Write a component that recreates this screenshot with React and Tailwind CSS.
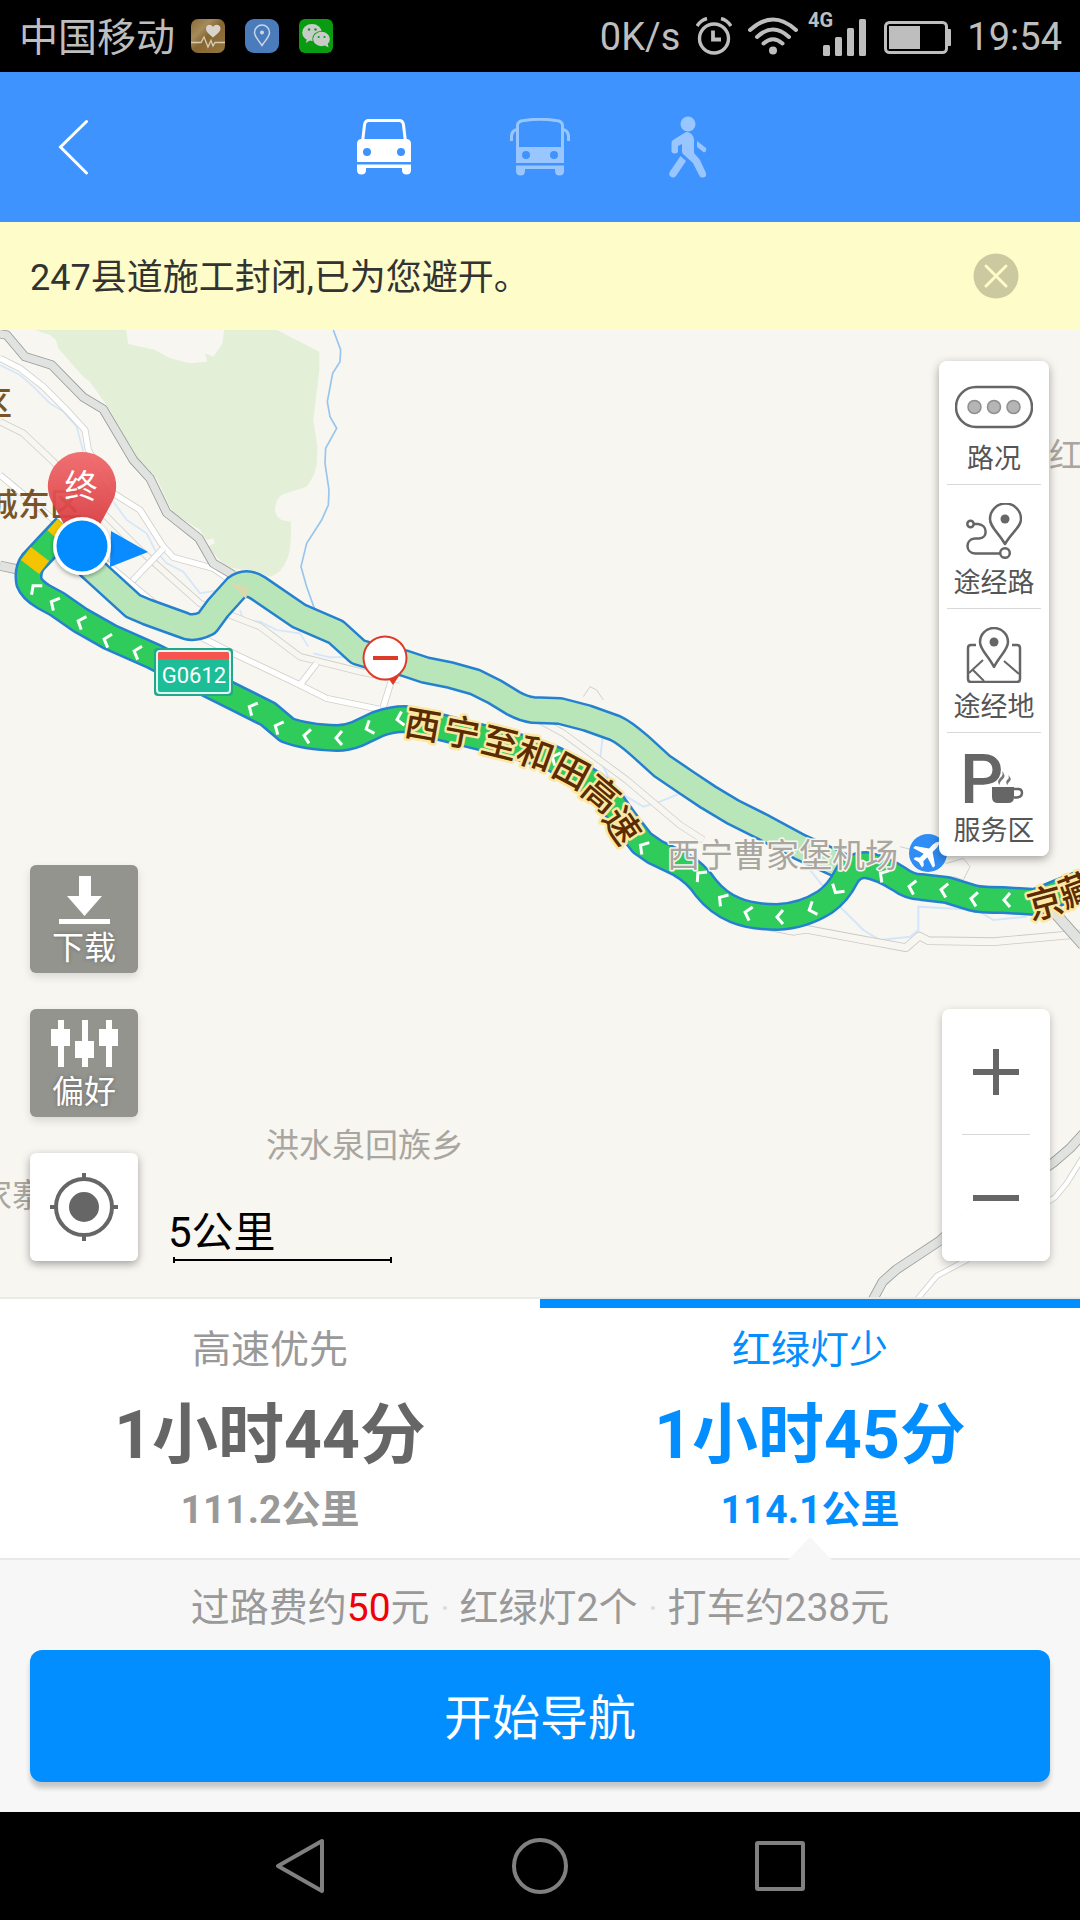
import React, { useState } from "react";

const FONT = "font-[Roboto,'Noto_Sans_CJK_SC',sans-serif]";

function StatusBar() {
  return (
    <header className="flex h-[72px] items-center justify-between bg-black pl-[19px] pr-[18px] text-[38px] leading-[44px] text-[#bebebe]">
      <div className="flex items-center gap-5">
        <span className="pt-1 text-[39px]">中国移动</span>
        <svg viewBox="0 0 34 34" className="-ml-1 size-[34px]" aria-hidden="true">
          <defs>
            <linearGradient id="health" x1="0" y1="0" x2="1" y2="1">
              <stop offset="0" stopColor="#8a6a38" />
              <stop offset=".3" stopColor="#a58a5a" />
              <stop offset=".5" stopColor="#866732" />
              <stop offset="1" stopColor="#96763e" />
            </linearGradient>
          </defs>
          <rect width="34" height="34" rx="7" fill="url(#health)" />
          <path d="M22 18.500C17 14.500 15 12 15 9.500C15 5.500 20 4.500 22 8C24 4.500 29.500 5.500 29.500 9.500C29.500 12 27 14.500 22 18.500Z" fill="#d8d4cc" />
          <path d="M0 23.500H10L13 18L17 28L20 21.500L22 27L24 23.500H34" fill="none" stroke="#d8cdb4" strokeWidth="1.300" />
        </svg>
        <svg viewBox="0 0 34 34" className="size-[34px]" aria-hidden="true">
          <rect width="34" height="34" rx="9" fill="#4a7cbc" />
          <path d="M17 26.500C13 20.500 9.500 17.500 9.500 13.500A7.500 7.500 0 0 1 24.500 13.500C24.500 17.500 21 20.500 17 26.500Z" fill="none" stroke="#ccd8e6" strokeWidth="1.500" />
          <circle cx="17" cy="13.500" r="2" fill="#ccd8e6" />
        </svg>
        <svg viewBox="0 0 34 34" className="size-[34px]" aria-hidden="true">
          <rect width="34" height="34" rx="6" fill="#0a9c10" />
          <path d="M7 24L8 19H14Z" fill="#c8ccc8" />
          <ellipse cx="13" cy="13.500" rx="9.800" ry="8.400" fill="#c8ccc8" />
          <circle cx="10" cy="10.500" r="1.200" fill="#0a9c10" />
          <circle cx="16.500" cy="10.500" r="1.200" fill="#0a9c10" />
          <ellipse cx="22.500" cy="20" rx="9.200" ry="8" fill="#0a9c10" />
          <ellipse cx="22.500" cy="20" rx="8.400" ry="7.200" fill="#c8ccc8" />
          <path d="M25 26L29.500 28.500L28.500 24Z" fill="#c8ccc8" />
          <circle cx="19.700" cy="18" r="1.100" fill="#0a9c10" />
          <circle cx="25.500" cy="18" r="1.100" fill="#0a9c10" />
        </svg>
      </div>
      <div className="flex items-center">
        <span className="pt-[2px]">0K/s</span>
        <svg viewBox="0 0 36 38" className="ml-4 h-[38px] w-9" fill="none" stroke="#bebebe" strokeWidth="3.400" aria-hidden="true">
          <circle cx="18" cy="21.500" r="14.500" />
          <path d="M17 13.500V22.500H25" strokeWidth="3.800" />
          <path d="M1 9Q5 3 11 1.500M35 9Q31 3 25 1.500" />
        </svg>
        <svg viewBox="0 0 50 38" className="ml-4 h-[38px] w-[50px]" fill="none" stroke="#bebebe" strokeWidth="4" strokeLinecap="round" aria-hidden="true">
          <path d="M2 13Q25 -8 48 13" />
          <path d="M9 20Q25 5 41 20" />
          <path d="M15.500 26.500Q25 18 34.500 26.500" />
          <circle cx="25" cy="33.500" r="4" fill="#bebebe" stroke="none" />
        </svg>
        <svg viewBox="0 0 58 50" className="mb-2 ml-[10px] h-[50px] w-[58px] overflow-visible" fill="#bebebe" aria-label="4G">
          <text x="0" y="20" fontSize="20" fontWeight="700">4G</text>
          <rect x="15" y="38" width="7" height="11" rx="1.500" />
          <rect x="27" y="30" width="7" height="19" rx="1.500" />
          <rect x="39" y="21" width="7" height="28" rx="1.500" />
          <rect x="51" y="12" width="7" height="37" rx="1.500" />
        </svg>
        <svg viewBox="0 0 67 34" className="ml-[18px] mt-[3px] h-[34px] w-[67px]" aria-hidden="true">
          <rect x="1.500" y="1.500" width="61" height="30" rx="4" fill="none" stroke="#bebebe" strokeWidth="3" />
          <rect x="5" y="5" width="31" height="23" fill="#bebebe" />
          <rect x="63" y="8" width="4" height="17" rx="1" fill="#bebebe" />
        </svg>
        <span className="ml-4 pt-[2px]">19:54</span>
      </div>
    </header>
  );
}

function CarIcon() {
  return (
    <svg viewBox="0 0 54 56" className="h-14 w-[54px]" aria-hidden="true">
      <path d="M5.500 23L7.500 6Q8 1.500 12 1.500H42Q46 1.500 46.500 6L48.500 23" fill="none" stroke="currentColor" strokeWidth="3" />
      <path fillRule="evenodd" fill="currentColor" d="M4 20H50Q54 20.500 54 25V43H0V25Q0 20.500 4 20ZM10 29A4 4 0 1 0 10 37A4 4 0 1 0 10 29ZM44 29A4 4 0 1 0 44 37A4 4 0 1 0 44 29Z" />
      <path fill="currentColor" d="M0 45.500H54V51Q54 55.500 49.500 55.500Q45 55.500 45 51V49H9V51Q9 55.500 4.500 55.500Q0 55.500 0 51Z" />
    </svg>
  );
}

function BusIcon() {
  return (
    <svg viewBox="0 0 60 58" className="h-[58px] w-[60px]" aria-hidden="true">
      <path d="M7.500 30V7Q8 3 14 2.500Q30 0 46 2.500Q52 3 52.500 7V30" fill="none" stroke="currentColor" strokeWidth="3" />
      <path d="M1.500 23V18Q2 12.500 7 11.500M58.500 23V18Q58 12.500 53 11.500" fill="none" stroke="currentColor" strokeWidth="3" />
      <path fillRule="evenodd" fill="currentColor" d="M6 29H54V45H6ZM16 33A4 4 0 1 0 16 41A4 4 0 1 0 16 33ZM44 33A4 4 0 1 0 44 41A4 4 0 1 0 44 33Z" />
      <path fill="currentColor" d="M6 47.500H54V53Q54 57.500 49.500 57.500Q45 57.500 45 53V51H15V53Q15 57.500 10.500 57.500Q6 57.500 6 53Z" />
    </svg>
  );
}

function WalkIcon() {
  return (
    <svg viewBox="0 0 38 62" className="h-[62px] w-[38px]" fill="currentColor" aria-hidden="true">
      <circle cx="19" cy="8" r="7.500" />
      <path d="M17 16Q24 16 25 24V37L31 44L37 57Q38 61 34 61.500Q31 62 30 59L24 47L14 38Q12.500 36 13 32V28L9 30V36Q6 39 2.500 36V27Q2.500 25 4 24Z" />
      <path d="M28 25L37 32Q38 35 35 36.500L28 31Z" />
      <path d="M11.500 40L17 45L7 60Q4 63 1 60Q-.5 58 1 55.500Z" />
    </svg>
  );
}

function ModeBar() {
  const [mode, setMode] = useState("car");
  const modes = [
    { id: "car", label: "驾车", icon: <CarIcon /> },
    { id: "bus", label: "公交", icon: <BusIcon /> },
    { id: "walk", label: "步行", icon: <WalkIcon /> },
  ];
  return (
    <nav className="grid h-[150px] grid-cols-[1fr_auto_1fr] items-center bg-[#3e93ff] text-white">
      <button aria-label="返回" className="ml-[57px] w-8">
        <svg viewBox="0 0 32 56" className="h-14 w-8" fill="none" stroke="currentColor" strokeWidth="3" strokeLinecap="round">
          <path d="M29.500 2.500L3.500 28L29.500 54" />
        </svg>
      </button>
      <div className="mr-4 flex gap-[99px]">
        {modes.map((m) => (
          <button
            key={m.id}
            aria-label={m.label}
            aria-pressed={mode === m.id}
            onClick={() => setMode(m.id)}
            className={`flex h-20 items-center justify-center ${mode === m.id ? "text-white" : "text-[#9ac6ff]"}`}
          >
            {m.icon}
          </button>
        ))}
      </div>
    </nav>
  );
}

function Notice() {
  return (
    <div role="status" className="flex h-[108px] items-center justify-between bg-[#fefcc8] pl-[30px] pr-[61px] text-4xl text-[#333]">
      <p className="pt-1">247县道施工封闭,已为您避开。</p>
      <button aria-label="关闭">
        <svg viewBox="0 0 46 46" className="size-[46px]">
          <circle cx="23" cy="23" r="22.500" fill="#cbc99f" />
          <path d="M13 13L33 33M33 13L13 33" stroke="#fefcc8" strokeWidth="3" strokeLinecap="round" />
        </svg>
      </button>
    </div>
  );
}

function Road({ d, edge, fill, width }) {
  return (
    <g fill="none" strokeLinejoin="round">
      <path d={d} stroke={edge} strokeWidth={width} />
      <path d={d} stroke={fill} strokeWidth={width - 5} />
    </g>
  );
}

const MAIN_ROUTE =
  "M66 527L48 546L33 562Q27 570 29 582Q32 590 44 597L57 604L80 620L110 637L153 656L200 680L220 690L268 714L287 730Q305 737 337 738Q347 738 357 734L378 724Q392 719 405 719L440 727L480 737L518 747Q540 752 556 760L592 783Q606 793 618 811Q627 824 642 843L655 852L680 864Q696 873 706 888Q718 903 735 910Q752 917 777 917Q803 916 825 902Q838 893 846 877Q852 865 866 865Q882 868 899 879Q910 887 921 887L947 890L973 898Q980 900 1003 900L1036 902L1060 892L1090 880";
const ALT_ROUTE =
  "M88 565L133 606L147 612L183 625Q193 630 207 623L218 608L236 588Q246 580 258 588L299 616L336 632L358 652Q380 659 404 663L425 670L450 675L475 682L495 692L513 703Q524 709 533 710L560 711L587 718L615 728Q624 732 640 746L662 766L687 783L708 797L733 812L763 827L800 847L846 868";

const CHEVRONS = [
  [35, 588, 50], [54, 603, 28], [81, 622, 22], [107, 640, 18], [137, 652, 18], [252, 708, 26], [278, 727, 25],
  [307, 736, 8], [339, 738, 0], [369, 728, -22], [400, 719, -12], [555, 758, 25], [643, 847, 32],
  [700, 875, 44], [722, 899, 35], [748, 913, 15], [780, 917, 0], [812, 909, -22], [837, 890, -58],
  [883, 875, 32], [912, 887, 12], [944, 890, 10], [974, 899, 8], [1007, 900, 0],
];

const ROAD_NAMES = [
  ["西", 423, 724, 10], ["宁", 462, 732, 11], ["至", 500, 742, 14], ["和", 536, 753, 20], ["田", 572, 770, 28],
  ["高", 602, 793, 40], ["速", 623, 825, 56], ["京", 1045, 902, -15], ["藏", 1077, 889, -20],
];

function MapCanvas() {
  return (
    <svg viewBox="0 330 1080 967" preserveAspectRatio="xMidYMid slice" className="absolute inset-0 h-full w-full" role="img" aria-label="路线地图">
      <defs>
        <linearGradient id="pin" x1="0" y1="0" x2="0" y2="1">
          <stop offset="0" stopColor="#f0686a" />
          <stop offset="1" stopColor="#d83a3e" />
        </linearGradient>
        <filter id="soft" x="-30%" y="-30%" width="160%" height="160%">
          <feDropShadow dx="0" dy="2" stdDeviation="2" floodOpacity=".35" />
        </filter>
      </defs>
      <rect y="330" width="1080" height="967" fill="#f7f6f1" />

      {/* north-west district, drawn on a grid three times finer */}
      <g transform="translate(0 320) scale(.33333)">
        <path fill="#e3efd7" d="M105 30L150 45L168 60L175 85L210 125L250 170L270 185L305 235L330 270L410 410L470 475L500 540L520 580L600 630L620 660L640 655L645 670L620 680L680 740L760 755L810 770Q845 760 860 720Q875 690 873 605L845 600Q825 590 825 565Q830 530 850 522L920 500Q950 460 950 430L952 380L940 300L958 150V95L830 30H672L668 70L640 110L615 100L622 125L570 130L510 115L465 90L385 72L378 30Z" />
        <g fill="none" stroke="#d5e6fb" strokeWidth="5">
          <path d="M0 135L60 165L100 200L150 250L190 275L230 320L250 395" />
          <path d="M340 545L380 600L440 640L465 690L500 730L550 755L600 820L660 810M720 870L730 900L780 905L830 930L900 940L925 980M940 1000L990 1012L1060 1010" />
        </g>
        <path fill="none" stroke="#98c5ee" strokeWidth="5" d="M1000 30L1022 90L1020 125L998 160L982 245L990 290L1010 325L977 385L975 430L987 510L985 555L965 600L920 670L903 740L920 800L943 865" />
        <Road width={22} edge="#d0d0cc" fill="#f7f6f1" d="M0 305L70 340L160 425L330 600L420 690L600 850L780 920L900 1010L1080 1055L1200 1080" />
        <Road width={21} edge="#d0d0cc" fill="#ffffff" d="M0 115L60 145L130 200L200 270L255 330L265 390L340 520L420 570L490 680L520 712L640 745L690 780" />
        <Road width={21} edge="#d0d0cc" fill="#ffffff" d="M390 790L490 685" />
        <Road width={21} edge="#d0d0cc" fill="#ffffff" d="M0 465L150 590L560 930L700 1000L900 1095L980 1135L1140 1168M900 1095L950 1030M1150 1160L1175 1080" />
        <Road width={28} edge="#999b98" fill="#e1e3e0" d="M-10 40L20 45L75 110L155 135L250 232L310 268L400 420L450 475L500 578L597 655L640 730L700 765" />
        <Road width={30} edge="#a5a7a4" fill="#e1e3e0" d="M0 737L60 750" />
      </g>

      {/* airport surroundings */}
      <g transform="translate(660 700) scale(.33333)">
        <g fill="none" stroke="#d5e6fb" strokeWidth="6">
          <path d="M-170 95L-180 180L-150 240L-100 290L-50 320L0 305L60 280M450 510L490 560L540 620L610 690L660 720L750 710L775 690V620L950 630L1000 660L1100 650" />
        </g>
        <path fill="none" stroke="#d0d0cc" strokeWidth="3" d="M-230 -10L-210 -40L-190 -30L-170 0M720 440L780 455L860 490L910 475L930 500L910 540L880 530" />
        <Road width={22} edge="#d0d0cc" fill="#f7f6f1" d="M-400 40L-290 100L-100 240L60 375L130 420" />
        <Road width={26} edge="#cacac6" fill="#f7f6f1" d="M330 680L400 694L440 688L600 718L738 743L778 708L805 722L1000 725L1260 702" />
        <Road width={34} edge="#999b98" fill="#e1e3e0" d="M1150 600L1270 735" />
      </g>

      {/* south-east roads */}
      <g transform="translate(840 980) scale(.33333)">
        <Road width={18} edge="#d0d0cc" fill="#ffffff" d="M230 960L290 888L380 840L500 740L645 652L680 610L730 530" />
        <Road width={30} edge="#999b98" fill="#e1e3e0" d="M98 960L128 905L170 868L300 782L400 690L550 610L640 548L690 505L740 450" />
      </g>

      <g fill="none" strokeLinejoin="round">
        <path d={ALT_ROUTE} stroke="#2481d0" strokeWidth="28" />
        <path d={ALT_ROUTE} stroke="#b9e6b9" strokeWidth="23" />
        <path d={MAIN_ROUTE} stroke="#2481d0" strokeWidth="28" />
        <path d={MAIN_ROUTE} stroke="#2fcc5c" strokeWidth="23" />
        <path d="M66 527L56 538M40 554L30 567" stroke="#f5c400" strokeWidth="23" />
      </g>
      <path d="M230 582L249 588L246 599Z" fill="#d9d9ae" />
      <g fill="none" stroke="#fff" strokeWidth="3">
        {CHEVRONS.map(([x, y, a]) => (
          <path key={`${x}-${y}`} d="M3 -7L-3 0L3 7" transform={`translate(${x} ${y}) rotate(${a})`} />
        ))}
      </g>

      <g fontSize="36" textAnchor="middle" fontWeight="500" fill="#5c2c00" stroke="#fbe8a4" strokeWidth="5" strokeLinejoin="round" paintOrder="stroke">
        {ROAD_NAMES.map(([c, x, y, a]) => (
          <text key={c} y="14" transform={`translate(${x} ${y}) rotate(${a})`}>{c}</text>
        ))}
      </g>
      <g fontSize="33" fill="#a9a59f" stroke="#f7f6f1" strokeWidth="3" strokeLinejoin="round" paintOrder="stroke">
        <text x="667" y="867">西宁曹家堡机场</text>
        <text x="1049" y="467">红</text>
        <text x="266" y="1157">洪水泉回族乡</text>
        <text x="-21" y="1207">家寨</text>
      </g>
      <g fontSize="32" fill="#785426" fontWeight="500">
        <text x="12" y="415" textAnchor="end">区</text>
        <text x="-14" y="516">城东区</text>
      </g>

      <g transform="translate(928 853)">
        <circle r="19" fill="#2f8df5" />
        <path transform="rotate(45)" fill="#fff" d="M0 -16Q2.500 -14 2.500 -9V-4L14 4V7L2.500 3.500V9L6 12V14.500L0 13L-6 14.500V12L-2.500 9V3.500L-14 7V4L-2.500 -4V-9Q-2.500 -14 0 -16Z" />
      </g>

      <g>
        <rect x="154" y="648" width="79" height="48" rx="4" fill="#22a78c" />
        <rect x="156" y="650" width="75" height="44" rx="4" fill="#dff7ee" />
        <rect x="158" y="652" width="71" height="40" rx="2" fill="#1dbd98" />
        <path d="M158 659V654Q158 652 160 652H227Q229 652 229 654V659Z" fill="#f75450" />
        <text x="194" y="683" fontSize="22" textAnchor="middle" fill="#fff">G0612</text>
      </g>

      <g transform="translate(385 658)">
        <path d="M3 20L8 27L14 18Z" fill="#dd3b27" />
        <circle r="21.500" fill="#fff" stroke="#dd3b27" strokeWidth="2" />
        <rect x="-12" y="-2" width="25" height="4" fill="#dd3b27" />
      </g>

      <path d="M82 452A34 34 0 0 1 111 504L97 530H67L53 504A34 34 0 0 1 82 452Z" fill="url(#pin)" opacity=".94" />
      <text x="81" y="498" fontSize="33" textAnchor="middle" fill="#fff">终</text>
      <path d="M111 531L148 552L110 567Z" fill="#0a8bff" />
      <circle cx="82" cy="546" r="29" fill="#fff" filter="url(#soft)" />
      <circle cx="82" cy="546" r="25.500" fill="#028cff" />
    </svg>
  );
}

const LAYERS = [
  {
    label: "路况",
    icon: (
      <svg viewBox="0 0 78 56" className="h-14 w-[78px]" aria-hidden="true">
        <rect x="1" y="8" width="76" height="40" rx="20" fill="none" stroke="#666" strokeWidth="2.500" />
        {[19.5, 39, 58.5].map((x) => (
          <circle key={x} cx={x} cy="28" r="6.500" fill="#b5b5b5" stroke="#8f8f8f" strokeWidth="1.500" />
        ))}
      </svg>
    ),
  },
  {
    label: "途经路",
    icon: (
      <svg viewBox="0 0 56 56" className="size-14" fill="none" stroke="#666" strokeWidth="2.500" aria-hidden="true">
        <circle cx="4.500" cy="21" r="3.200" />
        <path d="M8 21H12C22 22 22 35 13 35.500H9C-1 36 -1 50 9 50.500H34" />
        <circle cx="39" cy="50" r="4.800" />
        <path d="M39 41C32 29 24 24 24 16A15.300 15.300 0 0 1 55 16C55 24 46 29 39 41Z" strokeLinejoin="round" />
        <circle cx="39" cy="16" r="4.500" fill="#666" stroke="none" />
      </svg>
    ),
  },
  {
    label: "途经地",
    icon: (
      <svg viewBox="0 0 56 56" className="size-14" fill="none" stroke="#666" strokeWidth="2.500" strokeLinejoin="round" aria-hidden="true">
        <path d="M10 18H5Q2 18 2 21V52Q2 55 5 55H51Q54 55 54 52V21Q54 18 51 18H46" />
        <path d="M17 33L3 46M7 43L18 54M38 34L53 47" strokeWidth="2" />
        <path d="M28 40C22 28 14 23 14 15A14 14 0 0 1 42 15C42 23 34 28 28 40Z" />
        <circle cx="28" cy="15" r="4.500" fill="#666" stroke="none" />
      </svg>
    ),
  },
  {
    label: "服务区",
    icon: (
      <svg viewBox="0 0 60 56" className="h-14 w-[60px] overflow-visible" aria-hidden="true">
        <text x="-4" y="52" fontSize="68" fontWeight="500" fill="#666">P</text>
        <path d="M28 36H50V46Q50 52 44 52H34Q28 52 28 46Z" fill="#666" stroke="#fff" strokeWidth="2" paintOrder="stroke" />
        <path d="M50 38H54Q58 38 58 42Q58 47 50 46.500" fill="none" stroke="#666" strokeWidth="2.500" />
        <path d="M36 34Q32 31 36 27Q40 24 38 20Q43 25 38 29Q35 32 36 34ZM44 34Q41 32 43 29Q46 27 44 24Q49 28 45 31Q43 33 44 34Z" fill="#777" stroke="#fff" strokeWidth="1.500" paintOrder="stroke" />
      </svg>
    ),
  },
];

function LayerPanel() {
  return (
    <div className="absolute right-[31px] top-[31px] flex w-[110px] flex-col rounded-lg bg-white/98 shadow-[0_3px_10px_rgba(0,0,0,.35)]">
      {LAYERS.map((l, i) => (
        <React.Fragment key={l.label}>
          {i > 0 && <hr className="mx-2 border-[#d8d8d8]" />}
          <button className="flex flex-col items-center gap-[10px] pb-[11px] pt-[18px] text-[27px] leading-7 text-[#555]">
            {l.icon}
            <span>{l.label}</span>
          </button>
        </React.Fragment>
      ))}
    </div>
  );
}

function LeftTools() {
  const tile = "flex size-[108px] flex-col items-center rounded-md";
  const dark = "bg-[#94948f] shadow-[0_4px_8px_rgba(0,0,0,.12)]";
  const label = "-mt-px text-[32px] leading-[44px] text-white [text-shadow:0_0_4px_rgba(0,0,0,.3)]";
  return (
    <div className="absolute bottom-9 left-[30px] flex flex-col gap-9">
      <button className={`${tile} ${dark}`}>
        <svg viewBox="0 0 108 62" className="h-[62px] w-[108px]" fill="#fff" aria-hidden="true">
          <path d="M49 11H61V31H72L54.500 51L37 31H49Z" />
          <rect x="29" y="54" width="51" height="5" />
        </svg>
        <span className={label}>下载</span>
      </button>
      <button className={`${tile} ${dark}`}>
        <svg viewBox="0 0 108 62" className="h-[62px] w-[108px]" fill="#fff" aria-hidden="true">
          <path d="M28 11H34V58H28ZM52 11H58V58H52ZM76 11H82V58H76ZM21 20H40V37H21ZM45 32H64V49H45ZM69 20H88V37H69Z" />
        </svg>
        <span className={label}>偏好</span>
      </button>
      <button aria-label="定位" className={`${tile} justify-center bg-white shadow-[0_3px_8px_rgba(0,0,0,.35)]`}>
        <svg viewBox="0 0 70 70" className="size-[70px]" fill="none" stroke="#666" strokeWidth="4" aria-hidden="true">
          <circle cx="35" cy="35" r="28" />
          <circle cx="35" cy="35" r="15" fill="#666" stroke="none" />
          <path d="M35 1V9M35 61V69M1 35H9M61 35H69" />
        </svg>
      </button>
    </div>
  );
}

function ZoomControl() {
  return (
    <div className="absolute bottom-9 right-[30px] flex w-[108px] flex-col rounded-lg bg-white/98 shadow-[0_3px_8px_rgba(0,0,0,.25)]">
      <button aria-label="放大" className="flex h-[125px] items-center justify-center">
        <svg viewBox="0 0 46 46" className="size-[46px]" stroke="#666" strokeWidth="6">
          <path d="M0 23H46M23 0V46" />
        </svg>
      </button>
      <hr className="mx-5 border-[#d8d8d8]" />
      <button aria-label="缩小" className="flex h-[126px] items-center justify-center">
        <svg viewBox="0 0 46 46" className="size-[46px]" stroke="#666" strokeWidth="6">
          <path d="M0 23H46" />
        </svg>
      </button>
    </div>
  );
}

function ScaleBar() {
  return (
    <div className="absolute bottom-[34px] left-[168px] flex flex-col text-[42px] leading-[48px] text-black">
      <span>5公里</span>
      <div className="ml-[5px] flex h-[6px] w-[219px] items-center border-x-2 border-black">
        <div className="h-[2px] w-full bg-black" />
      </div>
    </div>
  );
}

function MapView() {
  return (
    <main className="relative min-h-[900px] flex-1 overflow-hidden bg-[#f7f6f1]">
      <MapCanvas />
      <LayerPanel />
      <LeftTools />
      <ScaleBar />
      <ZoomControl />
    </main>
  );
}

const ROUTES = [
  { name: "高速优先", time: "1小时44分", distance: "111.2公里" },
  { name: "红绿灯少", time: "1小时45分", distance: "114.1公里" },
];

function RoutePanel() {
  const [active, setActive] = useState(1);
  return (
    <section className="bg-[#f7f7f7]">
      <div role="tablist" className="grid grid-cols-2 border-y-2 border-[#e9e9e7] bg-white">
        {ROUTES.map((r, i) => {
          const on = i === active;
          return (
            <button
              key={r.name}
              role="tab"
              aria-selected={on}
              onClick={() => setActive(i)}
              className={`relative flex flex-col items-center border-t-[9px] pb-[26px] pt-5 ${on ? "border-[#028eff] text-[#028eff]" : "border-transparent text-[#999]"}`}
            >
              <span className="text-[39px] leading-[44px]">{r.name}</span>
              <span className={`mt-6 text-[66px] font-bold leading-[80px] ${on ? "" : "text-[#666]"}`}>{r.time}</span>
              <span className="mt-3 text-[39px] font-bold leading-[44px]">{r.distance}</span>
              {on && (
                <svg viewBox="0 0 44 24" className="absolute -bottom-[2px] left-1/2 h-6 w-11 -translate-x-1/2" aria-hidden="true">
                  <path d="M0 24L22 1L44 24Z" fill="#f7f7f7" />
                </svg>
              )}
            </button>
          );
        })}
      </div>
      <div className="px-[30px] pb-[30px] pt-[26px]">
        <p className="flex items-center justify-center gap-[13px] text-[39px] leading-[44px] text-[#999]">
          <span>过路费约<span className="text-[#f00008]">50</span>元</span>
          <span className="size-1 rounded-full bg-[#dcdcdc]" />
          <span>红绿灯2个</span>
          <span className="size-1 rounded-full bg-[#dcdcdc]" />
          <span>打车约238元</span>
        </p>
        <button className="mt-5 h-[132px] w-full rounded-xl bg-[#028eff] pt-[6px] text-5xl text-white shadow-[0_6px_5px_rgba(0,0,0,.2)]">开始导航</button>
      </div>
    </section>
  );
}

function SystemNav() {
  return (
    <footer className="flex h-[108px] items-center justify-center gap-[180px] bg-black">
      <button aria-label="系统返回">
        <svg viewBox="0 0 60 60" className="size-[60px]" fill="none" stroke="#808080" strokeWidth="4" strokeLinejoin="round">
          <path d="M52 5V55L8 30Z" />
        </svg>
      </button>
      <button aria-label="主屏幕">
        <svg viewBox="0 0 60 60" className="size-[60px]" fill="none" stroke="#808080" strokeWidth="4">
          <circle cx="30" cy="30" r="26" />
        </svg>
      </button>
      <button aria-label="最近任务">
        <svg viewBox="0 0 60 60" className="size-[60px]" fill="none" stroke="#808080" strokeWidth="4">
          <rect x="7" y="7" width="46" height="46" rx="1" />
        </svg>
      </button>
    </footer>
  );
}

export default function App() {
  return (
    <div lang="zh-CN" className={`flex min-h-screen flex-col ${FONT}`}>
      <StatusBar />
      <ModeBar />
      <Notice />
      <MapView />
      <RoutePanel />
      <SystemNav />
    </div>
  );
}
